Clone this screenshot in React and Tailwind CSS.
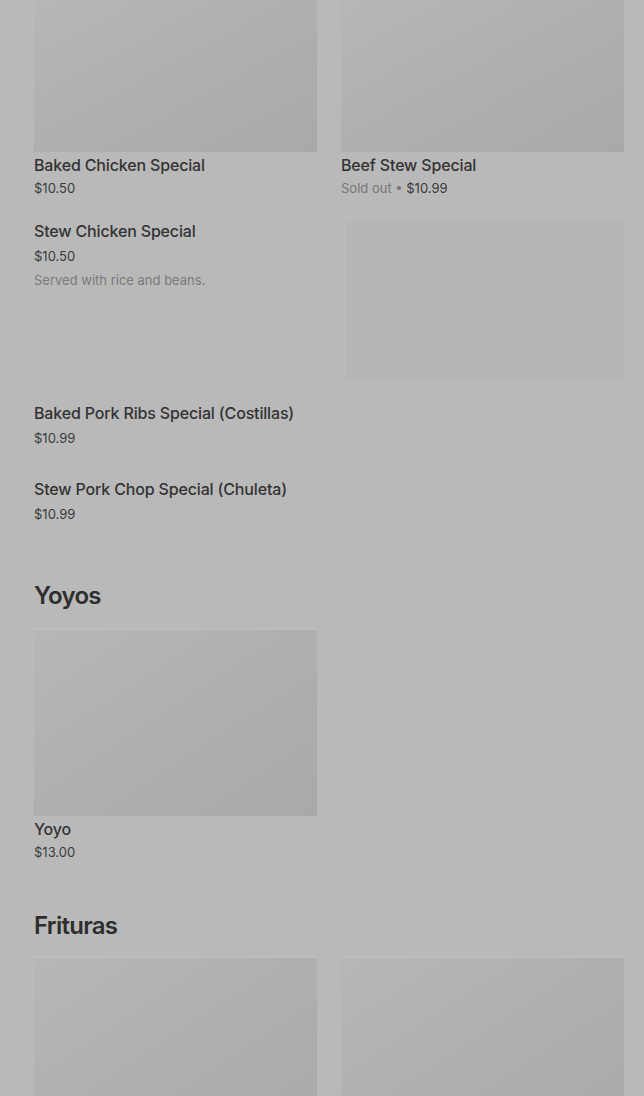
function Photo({ className, edge = true }) {
  return (
    <div
      className={
        "bg-gradient-to-br from-[#b7b7b7] via-[#afafaf] to-[#a9a9a9] " +
        (edge ? "border-t-2 border-[#bdbdbd] " : "") +
        className
      }
    />
  );
}

function Card({ title, price, sold, imgTop }) {
  return (
    <div>
      {imgTop ? <Photo edge={false} className="h-[152px]" /> : <Photo className="h-[188px]" />}
      <div className="mt-[3px] text-[16px] leading-5 font-medium tracking-[-0.01em] text-[#333]">{title}</div>
      <div className="mt-[4px] text-[13px] leading-[18px] text-[#3a3a3a]">
        {sold && <span className="text-[#777]">Sold out • </span>}
        {price}
      </div>
    </div>
  );
}

function Row({ title, price, desc, className }) {
  return (
    <div className={className}>
      <div className="text-[16px] leading-5 font-medium tracking-[-0.01em] text-[#333]">{title}</div>
      <div className="mt-[6px] text-[13px] leading-[18px] text-[#3a3a3a]">{price}</div>
      {desc && <div className="mt-[6px] text-[13px] leading-[18px] text-[#7a7a7a]">{desc}</div>}
    </div>
  );
}

export default function App() {
  return (
    <div
      className="bg-[#b9b9b9] pl-[34px] pr-[20px] overflow-hidden h-[1096px]"
      style={{ fontFamily: "Inter, 'Liberation Sans', sans-serif" }}
    >
      <div className="grid grid-cols-2 gap-x-6">
        <Card title="Baked Chicken Special" price="$10.50" imgTop />
        <Card title="Beef Stew Special" price="$10.99" sold imgTop />
      </div>

      <div className="mt-[24px] flex justify-between">
        <Row title="Stew Chicken Special" price="$10.50" desc="Served with rice and beans." />
        <div className="mt-px w-[277px] h-[157px] bg-[#b5b5b5]" />
      </div>

      <Row className="mt-[24px]" title="Baked Pork Ribs Special (Costillas)" price="$10.99" />
      <Row className="mt-[32px]" title="Stew Pork Chop Special (Chuleta)" price="$10.99" />

      <h2 className="mt-[57px] text-[24px] leading-8 font-semibold tracking-[-0.03em] text-[#2e2e2e]">Yoyos</h2>
      <div className="mt-[16px] grid grid-cols-2 gap-x-6">
        <Card title="Yoyo" price="$13.00" />
      </div>

      <h2 className="mt-[49px] text-[24px] leading-8 font-semibold tracking-[-0.03em] text-[#2e2e2e]">Frituras</h2>
      <div className="mt-[14px] grid grid-cols-2 gap-x-6">
        <Photo className="h-[188px]" />
        <Photo className="h-[188px]" />
      </div>
    </div>
  );
}
